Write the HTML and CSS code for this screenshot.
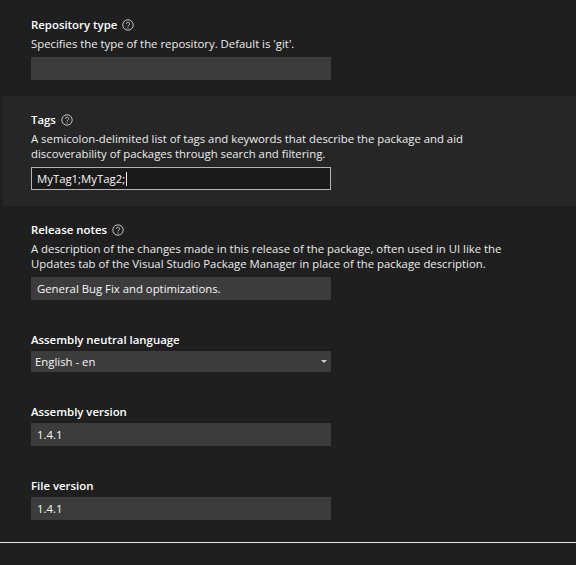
FILE: index.html
```html
<!DOCTYPE html>
<html lang="en">
<head>
  <meta charset="UTF-8">
  <title>Package properties</title>
  <link rel="stylesheet" href="styles.css">
</head>
<body>
  <div class="page">
    <section class="field first">
      <h3 class="label">Repository type
        <svg class="help" viewBox="0 0 12 12"><circle cx="6" cy="6" r="5.2"/><path d="M4.4 4.8a1.6 1.6 0 1 1 2.5 1.3c-.6.4-.9.7-.9 1.3"/><circle class="dot" cx="6" cy="9" r=".55"/></svg>
      </h3>
      <p class="desc">Specifies the type of the repository. Default is 'git'.</p>
      <div class="input"></div>
    </section>

    <section class="field active">
      <h3 class="label">Tags
        <svg class="help" viewBox="0 0 12 12"><circle cx="6" cy="6" r="5.2"/><path d="M4.4 4.8a1.6 1.6 0 1 1 2.5 1.3c-.6.4-.9.7-.9 1.3"/><circle class="dot" cx="6" cy="9" r=".55"/></svg>
      </h3>
      <p class="desc">A semicolon-delimited list of tags and keywords that describe the package and aid discoverability of packages through search and filtering.</p>
      <div class="input focused">MyTag1;MyTag2;<span class="caret"></span></div>
    </section>

    <section class="field notes">
      <h3 class="label">Release notes
        <svg class="help" viewBox="0 0 12 12"><circle cx="6" cy="6" r="5.2"/><path d="M4.4 4.8a1.6 1.6 0 1 1 2.5 1.3c-.6.4-.9.7-.9 1.3"/><circle class="dot" cx="6" cy="9" r=".55"/></svg>
      </h3>
      <p class="desc">A description of the changes made in this release of the package, often used in UI like the Updates tab of the Visual Studio Package Manager in place of the package description.</p>
      <div class="input">General Bug Fix and optimizations.</div>
    </section>

    <section class="field plain language">
      <h3 class="label">Assembly neutral language</h3>
      <div class="select">English - en<span class="arrow"></span></div>
    </section>

    <section class="field plain assembly">
      <h3 class="label">Assembly version</h3>
      <div class="input">1.4.1</div>
    </section>

    <section class="field plain file">
      <h3 class="label">File version</h3>
      <div class="input">1.4.1</div>
    </section>

    <div class="divider"></div>
  </div>
</body>
</html>
```

FILE: styles.css
```css
html, body {
  margin: 0;
  padding: 0;
  height: 565px;
  overflow: hidden;
}

body {
  background-color: #1f1f1f;
  color: #f1f1f1;
  font-family: 'Open Sans', 'Noto Sans', sans-serif;
  font-size: 11.35px;
}

.page {
  display: flex;
  flex-direction: column;
}

.field {
  margin-left: 3px;
  padding: 0 28px;
}

.first {
  height: 96px;
  padding-top: 16px;
  box-sizing: border-box;
}

.active {
  height: 110px;
  padding-top: 15px;
  box-sizing: border-box;
  background-color: #262626;
}

.notes {
  height: 120px;
  padding-top: 15px;
  box-sizing: border-box;
}

.plain {
  box-sizing: border-box;
}

.language {
  height: 77px;
  padding-top: 5px;
}

.assembly {
  height: 74px;
}

.file {
  height: 65px;
}

.label {
  display: flex;
  align-items: center;
  gap: 5px;
  margin: 0;
  height: 17px;
  font-size: 11.4px;
  font-weight: 600;
  color: #ffffff;
}

.help {
  width: 12px;
  height: 12px;
  fill: none;
  stroke: #e8e8e8;
  stroke-width: 0.8;
}

.help .dot {
  fill: #e8e8e8;
  stroke: none;
}

.desc {
  max-width: 490px;
  margin: 3px 0 6px;
  line-height: 15px;
  color: #ececec;
}

.input,
.select {
  box-sizing: border-box;
  width: 300px;
  height: 23px;
  padding: 0 6px;
  line-height: 23px;
  background-color: #3c3c3c;
  color: #f8f8f8;
}

.plain .label {
  margin-bottom: 3px;
}

.focused {
  display: flex;
  align-items: center;
  padding: 0 5px;
  background-color: #1a1a1a;
  border: 1px solid #b4b4b4;
}

.caret {
  width: 1px;
  height: 14px;
  margin-left: 1px;
  background-color: #f1f1f1;
}

.select {
  display: flex;
  align-items: center;
  justify-content: space-between;
  height: 21px;
  padding: 0 4px;
}

.arrow {
  width: 0;
  height: 0;
  border-left: 3px solid transparent;
  border-right: 3px solid transparent;
  border-top: 3px solid #d0d0d0;
}

.divider {
  height: 1px;
  background-color: #e6e6e6;
}
```
